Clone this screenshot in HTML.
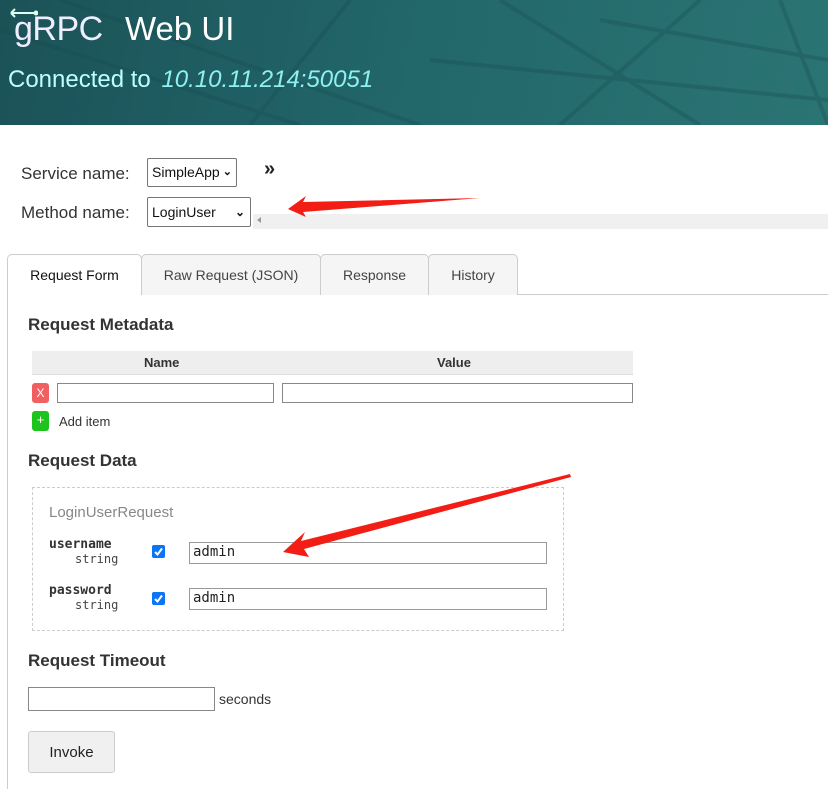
<!DOCTYPE html>
<html><head><style>
*{box-sizing:border-box}
body{margin:0;width:828px;height:789px;overflow:hidden;font-family:"Liberation Sans",sans-serif;background:#fff;color:#222;position:relative}
.hdr{position:absolute;left:0;top:0;width:828px;height:125px;background:linear-gradient(100deg,#1b5258 0%,#22676a 50%,#2b7474 100%);overflow:hidden}
.abs{position:absolute}
.sel{position:absolute;border:1px solid #767676;border-radius:2px;background:#fff;font-size:14px;padding:0 0 0 4px;color:#111}
.tab{position:absolute;top:254px;height:41px;border:1px solid #ccc;border-bottom:none;border-radius:5px 5px 0 0;background:#f5f5f5;font-size:14px;color:#444;text-align:center;line-height:40px}
h3{position:absolute;margin:0;font-size:17px;font-weight:bold;color:#333}
.inp{position:absolute;border:1px solid #888;background:#fff;height:20px}
.mono{font-family:"DejaVu Sans Mono","Liberation Mono",monospace}
.cb{position:absolute;width:13px;height:13px;background:#0b75f5;border-radius:2px}
</style></head><body>
<div class="hdr">
<svg class="abs" style="left:0;top:0" width="828" height="125"><g stroke="#174a50" stroke-width="4" fill="none" opacity=".3"><path d="M0 30 L300 125"/><path d="M60 0 L420 125"/><path d="M350 0 L250 125"/><path d="M500 0 L700 125"/><path d="M600 20 L828 60"/><path d="M700 0 L560 125"/><path d="M430 60 L828 100"/><path d="M780 0 L828 125"/></g></svg>
<svg class="abs" style="left:8px;top:8px" width="30" height="12"><path d="M3 5 L28 5 M3 5 L7 1 M3 5 L7 9" stroke="#dfe" stroke-width="2" fill="none"/><circle cx="28" cy="5" r="2.5" fill="#dfe"/></svg>
<div class="abs" style="left:14px;top:10px;font-size:34px;color:#eef;letter-spacing:-0.5px">gRPC</div>
<div class="abs" style="left:125px;top:10px;font-size:33px;color:#fff">Web UI</div>
<div class="abs" style="left:8px;top:66px;font-size:24px;color:#bff">Connected to <i style="color:#8ef0f0;margin-left:4px">10.10.11.214:50051</i></div>
</div>
<div class="abs" style="left:21px;top:164px;font-size:17px;color:#333">Service name:</div>
<div class="abs" style="left:21px;top:203px;font-size:17px;color:#333">Method name:</div>
<div class="sel" style="left:147px;top:158px;width:90px;height:29px;line-height:27px">SimpleApp<span style="position:absolute;right:4px;font-size:11px;font-weight:bold">⌄</span></div>
<div class="sel" style="left:147px;top:197px;width:104px;height:30px;line-height:28px">LoginUser<span style="position:absolute;right:5px;font-size:12px;font-weight:bold">⌄</span></div>
<div class="abs" style="left:264px;top:158px;font-size:20px;font-weight:bold">»</div>
<div class="abs" style="left:253px;top:214px;width:575px;height:15px;background:#f0f0f0"><span style="position:absolute;left:4px;top:3px;width:0;height:0;border:3px solid transparent;border-right:4px solid #999;border-left:none"></span></div>
<div class="abs" style="left:7px;top:294px;width:821px;height:495px;border-left:1px solid #ccc"></div>
<div class="abs" style="left:141px;top:294px;width:687px;height:1px;background:#ccc"></div>
<div class="tab" style="left:7px;width:135px;background:#fff;color:#111">Request Form</div>
<div class="tab" style="left:141px;width:180px">Raw Request (JSON)</div>
<div class="tab" style="left:320px;width:109px">Response</div>
<div class="tab" style="left:428px;width:90px">History</div>
<h3 style="left:28px;top:315px">Request Metadata</h3>
<div class="abs" style="left:32px;top:351px;width:601px;height:24px;background:#eee;border-bottom:1px solid #ddd;font-size:13px;font-weight:bold;color:#333"><span style="position:absolute;left:112px;top:4px">Name</span><span style="position:absolute;left:405px;top:4px">Value</span></div>
<div class="abs" style="left:32px;top:383px;width:17px;height:20px;background:#f06060;border-radius:3px;color:#fff;font-size:12px;text-align:center;line-height:20px">X</div>
<div class="inp" style="left:57px;top:383px;width:217px"></div>
<div class="inp" style="left:282px;top:383px;width:351px"></div>
<div class="abs" style="left:32px;top:411px;width:17px;height:20px;background:#1ec41e;border-radius:3px;color:#fff;font-size:13px;text-align:center;line-height:18px">+</div>
<div class="abs" style="left:59px;top:414px;font-size:13px;color:#333">Add item</div>
<h3 style="left:28px;top:451px">Request Data</h3>
<div class="abs" style="left:32px;top:487px;width:532px;height:144px;border:1px dashed #ccc"></div>
<div class="abs" style="left:49px;top:504px;font-size:15px;color:#888">LoginUserRequest</div>
<div class="abs mono" style="left:49px;top:537px;font-size:13px;font-weight:bold;color:#333">username</div>
<div class="abs mono" style="left:75px;top:552px;font-size:12px;color:#444">string</div>
<div class="abs mono" style="left:49px;top:583px;font-size:13px;font-weight:bold;color:#333">password</div>
<div class="abs mono" style="left:75px;top:598px;font-size:12px;color:#444">string</div>
<div class="cb" style="left:152px;top:545px"></div><svg class="abs" style="left:152px;top:545px" width="13" height="13"><path d="M3 7 L5.5 9.5 L10 3.5" stroke="#fff" stroke-width="2" fill="none"/></svg>
<div class="cb" style="left:152px;top:592px"></div><svg class="abs" style="left:152px;top:592px" width="13" height="13"><path d="M3 7 L5.5 9.5 L10 3.5" stroke="#fff" stroke-width="2" fill="none"/></svg>
<div class="inp mono" style="left:189px;top:542px;width:358px;height:22px;font-size:14px;padding:1px 3px;border-color:#999">admin</div>
<div class="inp mono" style="left:189px;top:588px;width:358px;height:22px;font-size:14px;padding:1px 3px;border-color:#999">admin</div>
<h3 style="left:28px;top:651px">Request Timeout</h3>
<div class="inp" style="left:28px;top:687px;width:187px;height:24px"></div>
<div class="abs" style="left:219px;top:691px;font-size:14px;color:#333">seconds</div>
<div class="abs" style="left:28px;top:731px;width:87px;height:42px;background:#f0f0f0;border:1px solid #ccc;border-radius:3px;font-size:15px;text-align:center;line-height:42px;color:#222">Invoke</div>
<svg class="abs" style="left:0;top:0" width="828" height="789"><path d="M480 198 L303 202 L306 196 L288 209 L306 217 L303 212 Z" fill="#f21d14"/><path d="M570 474 L301 541 L305 532 L283 552 L309 557 L304 549 L571 477 Z" fill="#f21d14"/></svg>
</body></html>
